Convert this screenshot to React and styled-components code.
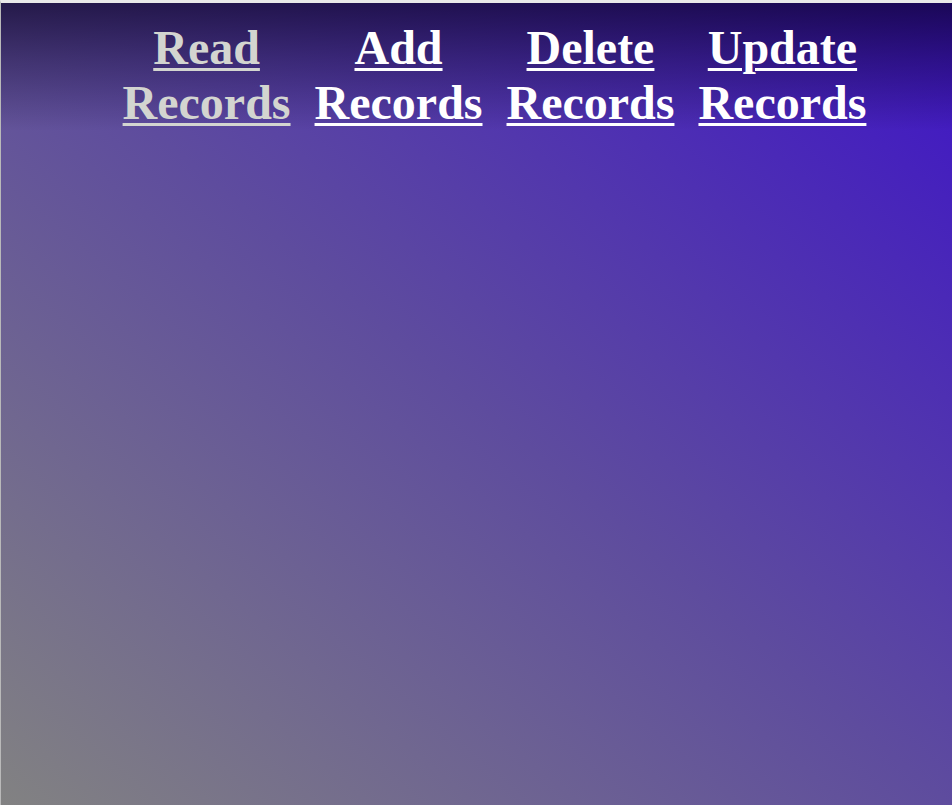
import React from "react";
import styled, { createGlobalStyle } from "styled-components";

const Global = createGlobalStyle`
  html, body {
    margin: 0;
    padding: 0;
    background: #e9e9e9;
  }
  * { box-sizing: border-box; }
`;

const Page = styled.div`
  min-height: 100vh;
  border-top: 3px solid #e9e9e9;
  border-left: 1px solid #b9b9b9;
  background: linear-gradient(to top right, #828282 0%, #5e4c9e 50%, #3e14c6 100%);
  font-family: "Liberation Serif", "Times New Roman", serif;
`;

const Header = styled.header`
  height: 128px;
  background: linear-gradient(to bottom, rgba(8, 0, 30, 0.66) 0%, rgba(8, 0, 30, 0.35) 45%, rgba(8, 0, 30, 0) 100%);
`;

const NavList = styled.ul`
  list-style: none;
  margin: 0;
  padding: 17px 0 0 36px;
  display: flex;
  justify-content: center;
  gap: 24px;
`;

const NavItem = styled.li`
  width: min-content;
  text-align: center;
`;

const NavLink = styled.a`
  display: block;
  font-size: 48px;
  font-weight: bold;
  line-height: 55px;
  color: ${(p) => (p.$active ? "#d3d5d0" : "#ffffff")};
  text-decoration: underline;
  text-decoration-thickness: 3px;
  text-underline-offset: 4px;
  cursor: pointer;
`;

const items = [
  { label: "Read Records", active: true },
  { label: "Add Records" },
  { label: "Delete Records" },
  { label: "Update Records" },
];

export default function App() {
  return (
    <>
      <Global />
      <Page>
        <Header>
          <nav>
            <NavList>
              {items.map((it) => (
                <NavItem key={it.label}>
                  <NavLink href="#" $active={it.active}>
                    {it.label}
                  </NavLink>
                </NavItem>
              ))}
            </NavList>
          </nav>
        </Header>
      </Page>
    </>
  );
}
